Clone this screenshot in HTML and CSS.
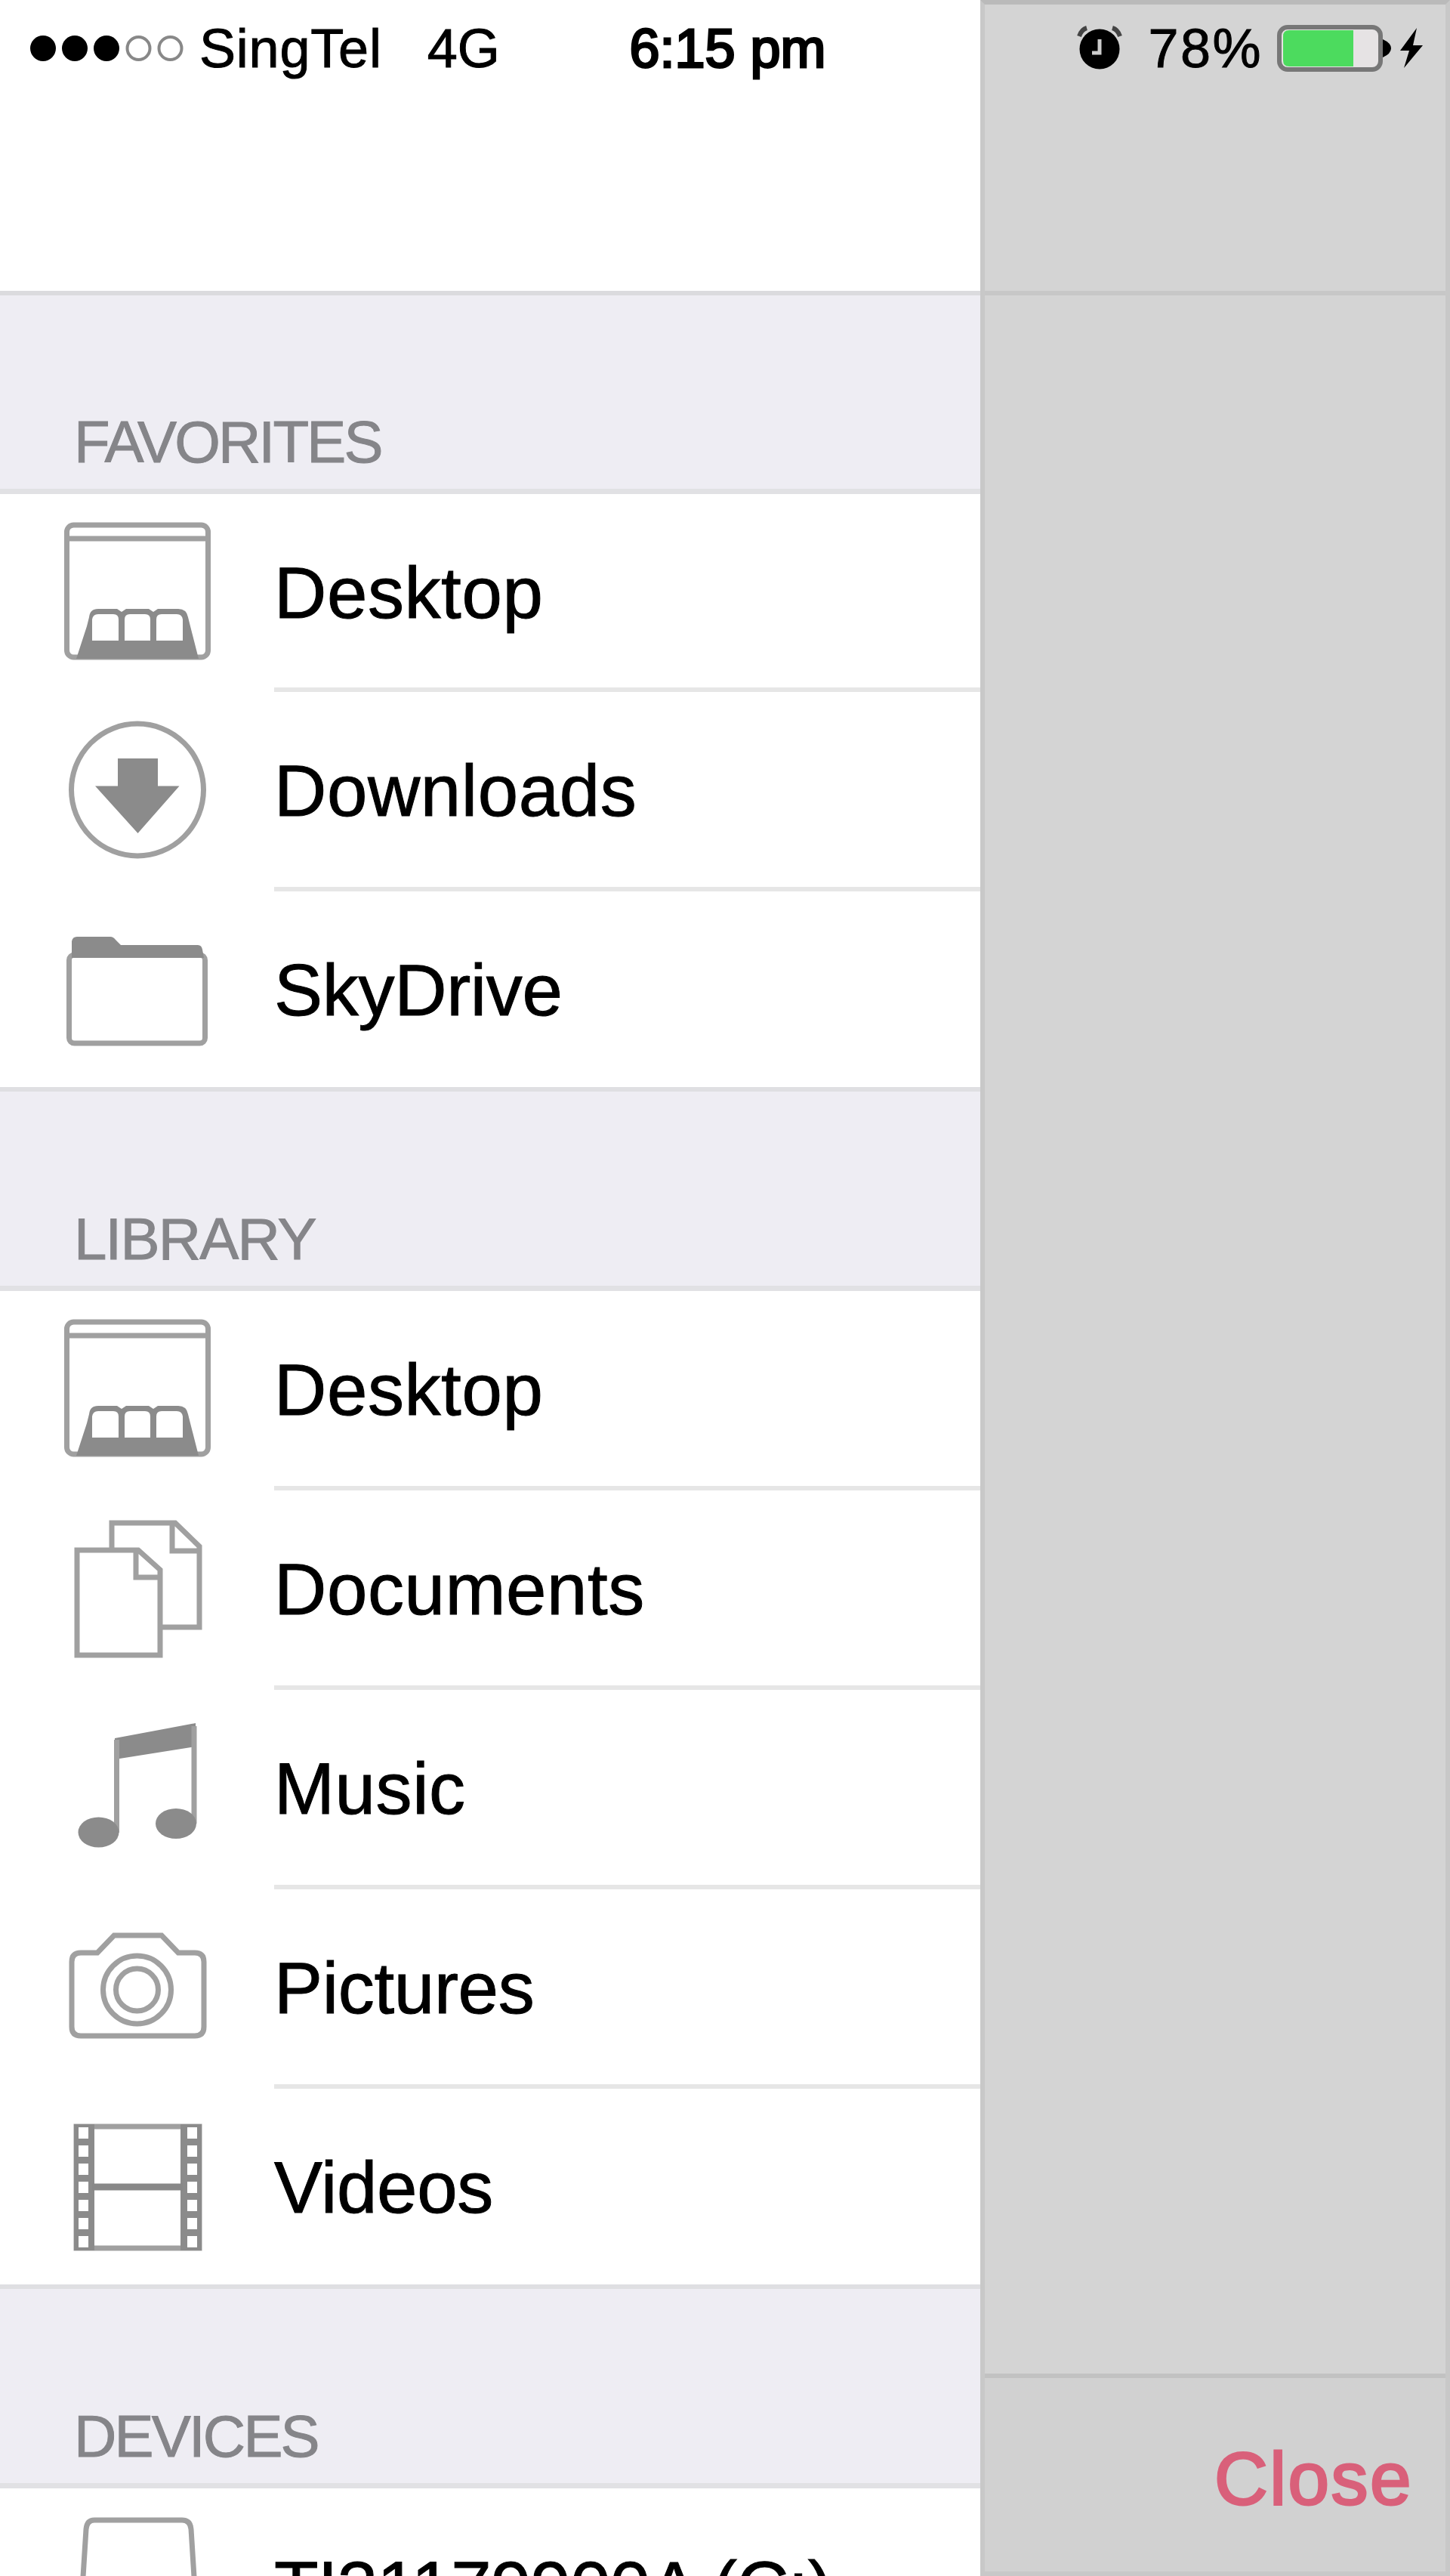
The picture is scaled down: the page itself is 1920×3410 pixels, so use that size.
FILE: index.html
```
<!DOCTYPE html>
<html lang="en">
<head>
  <meta charset="UTF-8" />
  <title>Files</title>
  <link rel="stylesheet" href="styles.css">
</head>
<body>

<svg width="0" height="0" class="defs">
  <symbol id="desktop" viewBox="0 0 363 258">
    <rect x="88.5" y="41" width="187" height="175" rx="9" class="line" />
    <path d="M88 59H276" class="line" />
    <path d="M101 218L115 175L118 163Q119 152 130 152H155L161 156L167 152H197L203 156L209 152H236Q247 152 249 163L252 175L263 218Z" class="solid" />
    <path d="M122 194V166Q123 159 130 159H150Q157 159 157 166V194ZM165 194V166Q165 159 172 159H192Q199 159 199 166V194ZM207 194V166Q207 159 214 159H234Q241 159 242 166V194Z" fill="#fff" />
  </symbol>
</svg>

<div class="screen">
  <div class="sidebar">
    <div class="topbar"></div>

    <div class="section favorites">
      <div class="header">FAVORITES</div>
      <div class="item"><svg class="icon"><use href="#desktop" /></svg><div class="label">Desktop</div></div>
      <div class="item">
        <svg class="icon" viewBox="0 0 363 258">
          <circle cx="182" cy="129.5" r="87.5" class="line" />
          <path d="M156 88H209V124.5H237.5L182.5 187L126 124.5H156Z" class="solid" />
        </svg>
        <div class="label">Downloads</div>
      </div>
      <div class="item">
        <svg class="icon" viewBox="0 0 363 258">
          <rect x="91.5" y="84" width="180" height="117" rx="7" class="line" />
          <path d="M95 88V66Q96 60 102 60H146Q150 60 153 64L160 71H262Q267 71 268 77L270 88Z" class="solid" />
        </svg>
        <div class="label tight">SkyDrive</div>
      </div>
    </div>

    <div class="section">
      <div class="header library">LIBRARY</div>
      <div class="item"><svg class="icon"><use href="#desktop" /></svg><div class="label">Desktop</div></div>
      <div class="item">
        <svg class="icon" viewBox="0 0 363 258">
          <path d="M148 78V43H232L264 74V181H214M228 43V80H264" class="line" />
          <path d="M102 79H183L212 105V218H102ZM180 79V115H212" class="line" />
        </svg>
        <div class="label">Documents</div>
      </div>
      <div class="item">
        <svg class="icon" viewBox="0 0 363 258">
          <path d="M152 64L259 44V75L152 92Z" class="solid" />
          <path d="M154.500 66V189M257 48V177" class="line" />
          <ellipse cx="130.500" cy="188.500" rx="27" ry="20" class="solid" />
          <ellipse cx="233" cy="177" rx="27" ry="20" class="solid" />
        </svg>
        <div class="label">Music</div>
      </div>
      <div class="item">
        <svg class="icon" viewBox="0 0 363 258">
          <path d="M107 84H129L151 61H214L236 84H258Q270 84 270 96V182Q270 194 258 194H107Q95 194 95 182V96Q95 84 107 84Z" class="line" />
          <circle cx="181.500" cy="133" r="45" class="line" />
          <circle cx="181.500" cy="133" r="28" class="line" />
        </svg>
        <div class="label tight">Pictures</div>
      </div>
      <div class="item">
        <svg class="icon" viewBox="0 0 363 258">
          <rect x="101" y="50" width="163" height="161" class="line" />
          <path d="M98 47H125V214H98ZM239 47H267V214H239Z" class="solid" />
          <path d="M122 130H242" class="line thick" />
          <path d="M110.500 51V212M254.500 51V212" class="perforation" />
        </svg>
        <div class="label tight">Videos</div>
      </div>
    </div>

    <div class="section">
      <div class="header">DEVICES</div>
      <div class="item">
        <svg class="icon" viewBox="0 0 363 258">
          <path d="M106 180L114 54Q115 42 125 42H241Q252 42 253 54L261 180Z" class="line" />
        </svg>
        <div class="label device">TI31179900A (C:)</div>
      </div>
    </div>
  </div>

  <div class="panel">
    <div class="navbar"></div>
    <div class="content"></div>
    <div class="toolbar"><span class="close">Close</span></div>
  </div>

  <div class="statusbar">
    <div class="carrier">
      <svg class="signal" viewBox="0 0 220 60">
        <circle cx="17" cy="30" r="17" />
        <circle cx="59" cy="30" r="17" />
        <circle cx="101" cy="30" r="17" />
        <circle cx="143.500" cy="30" r="15" class="empty" />
        <circle cx="185.500" cy="30" r="15" class="empty" />
      </svg>
      <span class="operator">SingTel</span>
      <span>4G</span>
    </div>
    <div class="time">6:15 pm</div>
    <div class="power">
      <svg class="alarm" viewBox="0 0 60 60">
        <circle cx="30" cy="31" r="26.500" />
        <path d="M3 14Q6 5 13 3M47 3Q54 5 57 14" class="bells" />
        <path d="M30 18V36H20" class="hands" />
      </svg>
      <span class="percent">78%</span>
      <svg class="battery" viewBox="0 0 196 64">
        <rect x="3" y="4" width="134" height="56" rx="11" fill="#e6e3e4" stroke="#777" stroke-width="6" />
        <path d="M16 8H101V56H16Q8 56 8 48V16Q8 8 16 8Z" fill="#4cdb5e" />
        <path d="M140 20Q151 25 151 32Q151 39 140 44Z" />
        <path d="M185 5L163 35H175L168 58L193 28H180Z" />
      </svg>
    </div>
  </div>
</div>

</body>
</html>
```
FILE: styles.css
```
body {
  margin: 0;
  font-family: "Liberation Sans", Arial, sans-serif;
  color: #000;
}
.defs {
  position: absolute;
}
.screen {
  position: relative;
  display: flex;
  width: 1920px;
  height: 3410px;
  overflow: hidden;
  background: #fff;
}
.sidebar {
  width: 1298px;
  flex-shrink: 0;
}
.topbar {
  box-sizing: border-box;
  height: 391px;
  border-bottom: 6px solid #dbdbde;
}
.header {
  box-sizing: border-box;
  display: flex;
  align-items: flex-end;
  height: 264px;
  padding: 0 0 18px 98px;
  border-bottom: 7px solid #e1e1e4;
  background: #eeedf3;
  color: #858589;
  font-size: 78px;
  line-height: 88px;
  letter-spacing: -2.8px;
  -webkit-text-stroke: 1px #858589;
}
.library {
  letter-spacing: -1.8px;
}
.item {
  display: flex;
  height: 264px;
}
.favorites .header {
  height: 263px;
}
.favorites .item:nth-child(2) {
  height: 262px;
}
.section .item:last-child {
  height: 265px;
}
.icon {
  width: 363px;
  height: 258px;
  flex-shrink: 0;
}
.line {
  fill: none;
  stroke: #a0a0a0;
  stroke-width: 7;
}
.thick {
  stroke: #888;
  stroke-width: 9;
}
.solid {
  fill: #8b8b8b;
}
.perforation {
  fill: none;
  stroke: #fff;
  stroke-width: 13;
  stroke-dasharray: 15 9;
}
.label {
  box-sizing: border-box;
  flex: 1;
  border-bottom: 6px solid #e6e6e6;
  font-size: 96px;
  line-height: 261px;
  letter-spacing: 0.6px;
  white-space: nowrap;
  -webkit-text-stroke: 1px #000;
}
.tight {
  letter-spacing: -0.3px;
}
.device {
  letter-spacing: -0.8px;
}
.item:last-child .label {
  border-bottom-color: #dfdfe2;
}
.item:last-child {
  box-shadow: inset 0 -6px #dfdfe2;
}
.panel {
  box-sizing: border-box;
  display: flex;
  flex-direction: column;
  flex: 1;
  border: 6px solid #c8c8c8;
  border-top-color: #bababa;
  background: #d4d4d4;
}
.navbar {
  height: 379px;
  border-bottom: 6px solid #c7c7c7;
}
.content {
  flex: 1;
}
.toolbar {
  box-sizing: border-box;
  height: 262px;
  padding-right: 43px;
  border-top: 6px solid #c2c2c2;
  background: #d1d1d1;
  text-align: right;
}
.close {
  color: #d9607a;
  font-size: 98px;
  line-height: 266px;
  letter-spacing: 2.5px;
  -webkit-text-stroke: 3px #d9607a;
}
/* The status bar runs over both panes */
.statusbar {
  position: absolute;
  top: 0;
  left: 0;
  box-sizing: border-box;
  display: grid;
  grid-template-columns: 1fr auto 1fr;
  align-items: center;
  width: 1920px;
  height: 126px;
  padding: 0 33px 0 40px;
  font-size: 72px;
  line-height: 128px;
  -webkit-text-stroke: 1px #000;
}
.carrier,
.power {
  display: flex;
  align-items: center;
}
.power {
  justify-content: flex-end;
}
.signal {
  width: 220px;
  height: 60px;
}
.empty {
  fill: none;
  stroke: #888;
  stroke-width: 4;
}
.carrier circle,
.power svg {
  -webkit-text-stroke: 0;
}
.operator {
  margin: 0 60px 0 4px;
  letter-spacing: 0.8px;
}
.time {
  letter-spacing: 0;
  -webkit-text-stroke: 3px #000;
}
.alarm {
  width: 60px;
  height: 60px;
}
.bells {
  fill: none;
  stroke: #444;
  stroke-width: 6;
}
.hands {
  fill: none;
  stroke: #ccc;
  stroke-width: 5;
}
.percent {
  margin: 0 19px 0 34px;
  letter-spacing: 2.5px;
}
.battery {
  width: 196px;
  height: 64px;
}
```
